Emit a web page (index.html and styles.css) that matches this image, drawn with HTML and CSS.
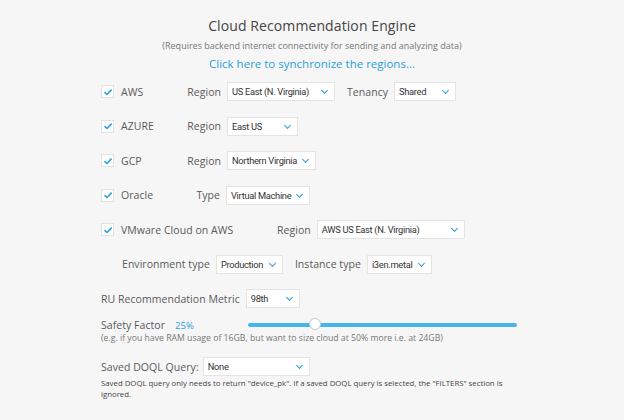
FILE: index.html
```html
<!DOCTYPE html>
<html>
<head>
<meta charset="utf-8">
<link rel="stylesheet" href="styles.css">
</head>
<body>
<div class="page">
  <div class="head">
    <div class="title">Cloud Recommendation Engine</div>
    <div class="subtitle">(Requires backend internet connectivity for sending and analyzing data)</div>
    <div class="link">Click here to synchronize the regions...</div>
  </div>

  <div class="rows">
    <div class="row">
      <span class="cb"><svg viewBox="0 0 10 10" width="10" height="10"><path d="M1.5 5.2 L4 7.5 L8.6 2.6" fill="none" stroke="#2a9fe0" stroke-width="1.6"/></svg></span>
      <span class="name w66">AWS</span>
      <span class="lbl w34">Region</span>
      <span class="sel w108">US East (N. Virginia)<i class="chev"></i></span>
      <span class="lbl gapl">Tenancy</span>
      <span class="sel w62">Shared<i class="chev"></i></span>
    </div>
    <div class="row">
      <span class="cb"><svg viewBox="0 0 10 10" width="10" height="10"><path d="M1.5 5.2 L4 7.5 L8.6 2.6" fill="none" stroke="#2a9fe0" stroke-width="1.6"/></svg></span>
      <span class="name w66">AZURE</span>
      <span class="lbl w34">Region</span>
      <span class="sel w71">East US<i class="chev"></i></span>
    </div>
    <div class="row">
      <span class="cb"><svg viewBox="0 0 10 10" width="10" height="10"><path d="M1.5 5.2 L4 7.5 L8.6 2.6" fill="none" stroke="#2a9fe0" stroke-width="1.6"/></svg></span>
      <span class="name w66">GCP</span>
      <span class="lbl w34">Region</span>
      <span class="sel w89">Northern Virginia<i class="chev"></i></span>
    </div>
    <div class="row">
      <span class="cb"><svg viewBox="0 0 10 10" width="10" height="10"><path d="M1.5 5.2 L4 7.5 L8.6 2.6" fill="none" stroke="#2a9fe0" stroke-width="1.6"/></svg></span>
      <span class="name w66">Oracle</span>
      <span class="lbl w33">Type</span>
      <span class="sel w84">Virtual Machine<i class="chev"></i></span>
    </div>
    <div class="row">
      <span class="cb"><svg viewBox="0 0 10 10" width="10" height="10"><path d="M1.5 5.2 L4 7.5 L8.6 2.6" fill="none" stroke="#2a9fe0" stroke-width="1.6"/></svg></span>
      <span class="name w156">VMware Cloud on AWS</span>
      <span class="lbl">Region</span>
      <span class="sel w148">AWS US East (N. Virginia)<i class="chev"></i></span>
    </div>
    <div class="row indent">
      <span class="lbl">Environment type</span>
      <span class="sel w67">Production<i class="chev"></i></span>
      <span class="lbl gapl2">Instance type</span>
      <span class="sel w65">i3en.metal<i class="chev"></i></span>
    </div>
    <div class="row">
      <span class="lbl">RU Recommendation Metric</span>
      <span class="sel w54">98th<i class="chev"></i></span>
    </div>
  </div>

  <div class="safety">
    <div class="safety-top">
      <span class="lbl">Safety Factor</span>
      <span class="pct">25%</span>
      <div class="slider"><div class="thumb"></div></div>
    </div>
    <div class="hint">(e.g. if you have RAM usage of 16GB, but want to size cloud at 50% more i.e. at 24GB)</div>
  </div>

  <div class="doql">
    <span class="lbl tight">Saved DOQL Query:</span>
    <span class="sel w107">None<i class="chev"></i></span>
  </div>
  <div class="note">Saved DOQL query only needs to return "device_pk". If a saved DOQL query is selected, the "FILTERS" section is ignored.</div>
</div>
</body>
</html>
```

FILE: styles.css
```css
html, body {
  margin: 0;
  padding: 0;
  background: #f6f6f6;
}
body {
  font-family: "Open Sans", "Noto Sans", sans-serif;
  color: #555;
  width: 624px;
  height: 420px;
  overflow: hidden;
}
.page {
  padding: 0 0 0 101px;
}
.head {
  margin-left: -101px;
  text-align: center;
  padding-top: 16px;
}
.title {
  font-size: 14px;
  color: #444;
  line-height: 20px;
  letter-spacing: 0.1px;
}
.subtitle {
  font-size: 9px;
  color: #777;
  line-height: 12px;
  margin-top: 4px;
}
.link {
  font-size: 11.5px;
  color: #2a9fdc;
  line-height: 16px;
  margin-top: 4px;
}
.rows {
  display: flex;
  flex-direction: column;
  gap: 15.5px;
  margin-top: 10px;
}
.row {
  display: flex;
  align-items: center;
  height: 19px;
}
.cb {
  width: 13px;
  height: 13px;
  background: #fff;
  border: 1px solid #e2e2e2;
  box-sizing: border-box;
  display: flex;
  align-items: center;
  justify-content: center;
  margin-right: 7px;
}
.name, .lbl {
  font-size: 10.5px;
  color: #5a5a5a;
  letter-spacing: 0.05px;
  white-space: nowrap;
}
.w66 { width: 66px; }
.w156 { width: 156px; }
.w34 { width: 34px; text-align: right; margin-right: 6px; }
.w33 { width: 33px; text-align: right; margin-right: 6px; }
.lbl { margin-right: 6px; }
.lbl.tight { margin-right: 4px; }
.gapl { margin-left: 12px; }
.gapl2 { margin-left: 12px; }
.indent { padding-left: 21px; }
.sel {
  position: relative;
  height: 19px;
  box-sizing: border-box;
  background: #fff;
  border: 1px solid #e4e4e4;
  font-family: "Roboto", sans-serif;
  font-size: 9.3px;
  letter-spacing: -0.3px;
  color: #333;
  display: flex;
  align-items: center;
  padding-left: 4px;
  white-space: nowrap;
}
.chev {
  position: absolute;
  right: 7px;
  top: 5px;
  width: 4px;
  height: 4px;
  border-right: 1.5px solid #2a9fe0;
  border-bottom: 1.5px solid #2a9fe0;
  transform: rotate(45deg);
}
.w108 { width: 108px; }
.w62 { width: 62px; }
.w71 { width: 71px; }
.w89 { width: 89px; }
.w84 { width: 84px; }
.w148 { width: 148px; }
.w67 { width: 67px; }
.w65 { width: 65px; }
.w54 { width: 54px; }
.w107 { width: 107px; }

.safety {
  margin-top: 10px;
}
.safety-top {
  display: flex;
  align-items: center;
  height: 14px;
}
.pct {
  font-size: 9.5px;
  color: #2a9fdc;
  margin-left: 4px;
  width: 73px;
}
.slider {
  position: relative;
  width: 269px;
  height: 4px;
  border-radius: 2px;
  background: #45b5f2;
}
.thumb {
  position: absolute;
  left: 61px;
  top: -5px;
  width: 10px;
  height: 10px;
  border-radius: 50%;
  background: #fff;
  border: 1.5px solid #c8c8c8;
}
.hint {
  font-size: 8.7px;
  color: #777;
  margin-top: 0px;
  line-height: 12px;
}
.doql {
  display: flex;
  align-items: center;
  height: 19px;
  margin-top: 13px;
}
.note {
  font-size: 7.8px;
  color: #444;
  line-height: 11px;
  margin-top: 2px;
  width: 420px;
}
```
